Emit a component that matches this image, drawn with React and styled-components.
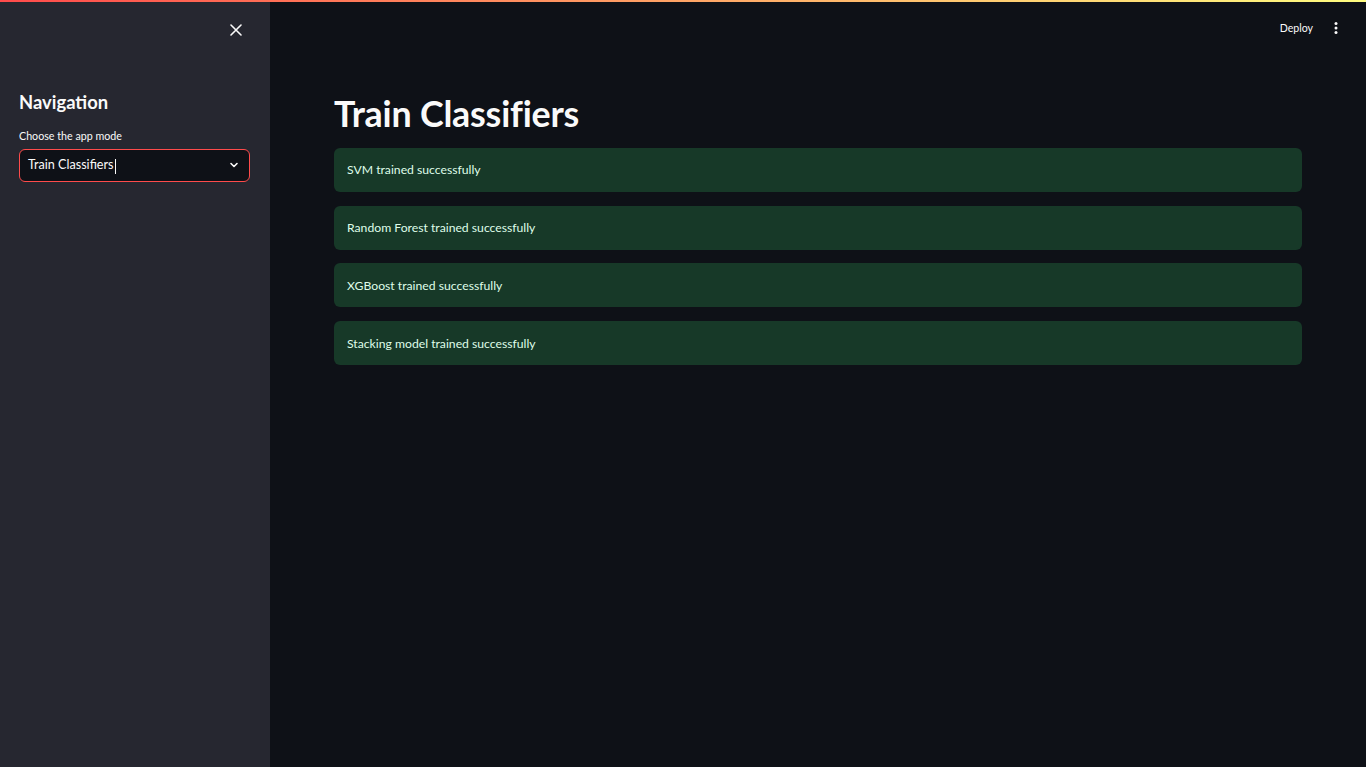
import React from "react";
import styled, { createGlobalStyle } from "styled-components";

const GlobalStyle = createGlobalStyle`
  html, body {
    margin: 0;
    padding: 0;
    background: #0e1117;
    font-family: Lato, "Noto Sans", sans-serif;
    color: #fafafa;
  }
`;

const Shell = styled.div`
  position: relative;
  display: flex;
  width: 100%;
  height: 767px;
  overflow: hidden;
`;

const Decoration = styled.div`
  position: absolute;
  top: 0;
  left: 0;
  right: 0;
  height: 2px;
  background: linear-gradient(90deg, #ff4b4b, #fffd80);
  z-index: 5;
`;

const Sidebar = styled.aside`
  flex: 0 0 270px;
  background: #262730;
  display: flex;
  flex-direction: column;
  padding: 0 20px 0 19px;
  box-sizing: border-box;
`;

const SidebarHeader = styled.div`
  display: flex;
  justify-content: flex-end;
  height: 60px;
  align-items: center;
  padding: 0 8px 0 0;
  box-sizing: border-box;
`;

const IconButton = styled.button`
  background: none;
  border: none;
  padding: 0;
  color: #fafafa;
  display: flex;
  align-items: center;
  cursor: pointer;
`;

const SideTitle = styled.h2`
  margin: 31px 0 0;
  font-size: 18.4px;
  font-weight: 700;
  line-height: 1.3;
`;

const Label = styled.label`
  display: block;
  margin-top: 14px;
  font-size: 10.7px;
  line-height: 1.4;
  color: #fafafa;
`;

const SelectBox = styled.div`
  margin-top: 5px;
  height: 33px;
  box-sizing: border-box;
  border: 1px solid #ff4b4b;
  border-radius: 6px;
  background: #0e1117;
  display: flex;
  align-items: center;
  justify-content: space-between;
  padding: 0 10px 0 8px;
  font-size: 12.6px;
`;

const Caret = styled.span`
  display: inline-block;
  width: 1px;
  height: 15px;
  background: #fafafa;
  vertical-align: middle;
  margin-left: 1px;
`;

const Main = styled.main`
  flex: 1;
  display: flex;
  flex-direction: column;
`;

const Toolbar = styled.header`
  height: 56px;
  display: flex;
  justify-content: flex-end;
  align-items: center;
  gap: 21px;
  padding-right: 28px;
`;

const Deploy = styled.span`
  font-size: 10.6px;
  color: #fafafa;
`;

const Content = styled.section`
  padding: 37px 64px 0;
  display: flex;
  flex-direction: column;
`;

const Title = styled.h1`
  margin: 0 0 12px;
  font-size: 35.8px;
  font-weight: 700;
  line-height: 1.2;
  letter-spacing: -0.2px;
`;

const Alerts = styled.div`
  display: flex;
  flex-direction: column;
  gap: 13.7px;
`;

const Alert = styled.div`
  height: 44px;
  box-sizing: border-box;
  border-radius: 6px;
  background: #173928;
  color: #dffde9;
  font-size: 12.2px;
  display: flex;
  align-items: center;
  padding: 0 13px;
`;

const messages = [
  "SVM trained successfully",
  "Random Forest trained successfully",
  "XGBoost trained successfully",
  "Stacking model trained successfully",
];

export default function App() {
  return (
    <>
      <GlobalStyle />
      <Shell>
        <Decoration />
        <Sidebar>
          <SidebarHeader>
            <IconButton aria-label="Close sidebar">
              <svg width="12" height="12" viewBox="0 0 12 12">
                <path d="M1 1 L11 11 M11 1 L1 11" stroke="#fafafa" strokeWidth="1.6" strokeLinecap="round" />
              </svg>
            </IconButton>
          </SidebarHeader>
          <SideTitle>Navigation</SideTitle>
          <Label>Choose the app mode</Label>
          <SelectBox>
            <span>
              Train Classifiers
              <Caret />
            </span>
            <svg width="10" height="10" viewBox="0 0 10 10">
              <path d="M2 3.5 L5 6.5 L8 3.5" fill="none" stroke="#fafafa" strokeWidth="1.6" strokeLinecap="round" strokeLinejoin="round" />
            </svg>
          </SelectBox>
        </Sidebar>
        <Main>
          <Toolbar>
            <Deploy>Deploy</Deploy>
            <IconButton aria-label="Main menu">
              <svg width="4" height="12" viewBox="0 0 4 12">
                <circle cx="2" cy="1.6" r="1.5" fill="#fafafa" />
                <circle cx="2" cy="6" r="1.5" fill="#fafafa" />
                <circle cx="2" cy="10.4" r="1.5" fill="#fafafa" />
              </svg>
            </IconButton>
          </Toolbar>
          <Content>
            <Title>Train Classifiers</Title>
            <Alerts>
              {messages.map((m) => (
                <Alert key={m}>{m}</Alert>
              ))}
            </Alerts>
          </Content>
        </Main>
      </Shell>
    </>
  );
}
